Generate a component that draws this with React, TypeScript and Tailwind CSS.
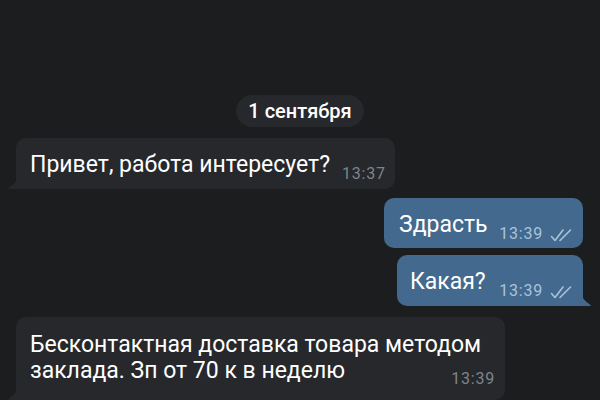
// Telegram-style dark chat thread: date pill, incoming and outgoing bubbles.

const FONT = "font-['Roboto','Noto_Sans',sans-serif]"

function DoubleCheck() {
  return (
    <svg width="22" height="14" viewBox="0 0 22 14" fill="none" className="ml-[7px] mb-[1px]">
      <path d="M1.5 8.5 L5 12.5 L13 2" stroke="#a9c3dc" strokeWidth="1.6" strokeLinecap="round" strokeLinejoin="round" />
      <path d="M10 12.5 L20.5 2" stroke="#a9c3dc" strokeWidth="1.6" strokeLinecap="round" />
    </svg>
  )
}

function InTail() {
  return (
    <svg width="10" height="12" viewBox="0 0 10 12" className="absolute bottom-0 -left-[8px]">
      <path d="M10 0 V12 H1 C0 12 0 11 1 10.5 C5 8 8 5 10 0 Z" fill="#26282c" />
    </svg>
  )
}

function OutTail() {
  return (
    <svg width="10" height="12" viewBox="0 0 10 12" className="absolute bottom-0 -right-[8px]">
      <path d="M0 0 V12 H9 C10 12 10 11 9 10.5 C5 8 2 5 0 0 Z" fill="#43698e" />
    </svg>
  )
}

export default function App() {
  return (
    <div className={`h-[400px] w-[600px] overflow-hidden bg-[#1c1d1f] flex flex-col pt-[95px] text-white ${FONT}`}>
      <div className="self-center h-[32px] px-[12px] rounded-full bg-[#26282c] flex items-center text-[20px] font-medium">
        1 сентября
      </div>

      <div className="relative self-start ml-[16px] mt-[11px] h-[51px] pl-[14px] pr-[9px] rounded-[10px] rounded-bl-none bg-[#26282c] flex items-start pt-[13px]">
        <span className="text-[23px] leading-[27px]">Привет, работа интересует?</span>
        <span className="ml-[12px] mt-[14px] text-[16px] leading-[18px] tracking-[0.8px] text-[#7f848b]">13:37</span>
        <InTail />
      </div>

      <div className="self-end mr-[17px] mt-[9px] h-[51px] w-[199px] pl-[15px] pr-[11px] rounded-[10px] bg-[#43698e] flex items-start pt-[13px]">
        <span className="text-[23px] leading-[27px]">Здрасть</span>
        <span className="ml-auto mt-[14px] flex items-end text-[16px] leading-[18px] tracking-[0.8px] text-[#a9c3dc]">
          13:39
          <DoubleCheck />
        </span>
      </div>

      <div className="relative self-end mr-[17px] mt-[7px] h-[51px] w-[186px] pl-[13px] pr-[11px] rounded-[10px] rounded-br-none bg-[#43698e] flex items-start pt-[13px]">
        <span className="text-[23px] leading-[27px]">Какая?</span>
        <span className="ml-auto mt-[14px] flex items-end text-[16px] leading-[18px] tracking-[0.8px] text-[#a9c3dc]">
          13:39
          <DoubleCheck />
        </span>
        <OutTail />
      </div>

      <div className="relative self-start ml-[16px] mt-[11px] w-[489px] pl-[14px] pr-[10px] pt-[15px] pb-[12px] rounded-[10px] rounded-bl-none bg-[#26282c] flex flex-col">
        <p className="text-[23px] leading-[26px]">
          Бесконтактная доставка товара методом
          <br />
          заклада. Зп от 70 к в неделю
        </p>
        <span className="self-end -mt-[14px] text-[16px] leading-[18px] tracking-[0.8px] text-[#7f848b]">13:39</span>
        <InTail />
      </div>
    </div>
  )
}
